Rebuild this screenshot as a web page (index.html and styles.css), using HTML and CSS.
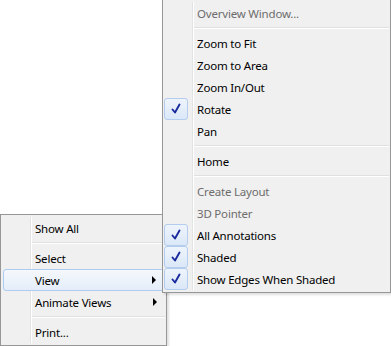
FILE: index.html
```html
<!DOCTYPE html>
<html>

<head>
    <link rel="stylesheet" href="styles.css">
</head>

<body>
    <div class="menu menu-main">
        <div class="item">Show All</div>
        <div class="sep"></div>
        <div class="item">Select</div>
        <div class="item hover">View<span class="arrow"></span></div>
        <div class="item">Animate Views<span class="arrow"></span></div>
        <div class="sep"></div>
        <div class="item">Print...</div>
    </div>

    <div class="menu menu-sub">
        <div class="item disabled">Overview Window...</div>
        <div class="sep"></div>
        <div class="item">Zoom to Fit</div>
        <div class="item">Zoom to Area</div>
        <div class="item">Zoom In/Out</div>
        <div class="item checked"><span class="check"><svg width="22" height="20" viewBox="0 0 22 20"><path d="M7.5 10.5 L10 13.5 L14.5 5.5" fill="none" stroke="#1a2a9e" stroke-width="1.9" stroke-linecap="round" stroke-linejoin="round"/></svg></span>Rotate</div>
        <div class="item">Pan</div>
        <div class="sep"></div>
        <div class="item">Home</div>
        <div class="sep"></div>
        <div class="item disabled">Create Layout</div>
        <div class="item disabled">3D Pointer</div>
        <div class="item checked"><span class="check"><svg width="22" height="20" viewBox="0 0 22 20"><path d="M7.5 10.5 L10 13.5 L14.5 5.5" fill="none" stroke="#1a2a9e" stroke-width="1.9" stroke-linecap="round" stroke-linejoin="round"/></svg></span>All Annotations</div>
        <div class="item checked"><span class="check"><svg width="22" height="20" viewBox="0 0 22 20"><path d="M7.5 10.5 L10 13.5 L14.5 5.5" fill="none" stroke="#1a2a9e" stroke-width="1.9" stroke-linecap="round" stroke-linejoin="round"/></svg></span>Shaded</div>
        <div class="item checked"><span class="check"><svg width="22" height="20" viewBox="0 0 22 20"><path d="M7.5 10.5 L10 13.5 L14.5 5.5" fill="none" stroke="#1a2a9e" stroke-width="1.9" stroke-linecap="round" stroke-linejoin="round"/></svg></span>Show Edges When Shaded</div>
    </div>
</body>

</html>
```

FILE: styles.css
```css
body {
    margin: 0;
    background-color: #fff;
    font-family: "Noto Sans", "Open Sans", sans-serif;
    font-size: 11.5px;
    letter-spacing: -0.2px;
}

/* popup menus float over the page */
.menu {
    position: absolute;
    box-sizing: border-box;
    background-color: #f0f0f0;
    border: 1px solid #979797;
    padding: 2px 0;
    box-shadow: 2px 2px 2px rgba(0, 0, 0, 0.12);
}

/* gutter line with a white edge */
.menu::before {
    content: "";
    position: absolute;
    top: 2px;
    bottom: 2px;
    left: 29px;
    width: 1px;
    background-color: #e2e3e3;
    border-right: 1px solid #fff;
}

.menu-main {
    left: 0;
    top: 214px;
    width: 167px;
}

.menu-sub {
    left: 162px;
    top: -1px;
    width: 229px;
}

.item {
    position: relative;
    height: 21px;
    padding-top: 1px;
    line-height: 22px;
    padding-left: 34px;
    color: #000;
    white-space: nowrap;
}

.disabled {
    color: #6d6d6d;
}

.sep {
    height: 8px;
    margin-left: 31px;
    margin-right: 1px;
    position: relative;
}

.sep::after {
    content: "";
    position: absolute;
    left: 0;
    right: 0;
    top: 3px;
    height: 1px;
    background-color: #e0e0e0;
    border-bottom: 1px solid #fff;
}

.hover {
    margin: 0 1px 0 2px;
    padding-left: 31px;
    border: 1px solid #aeccf1;
    border-radius: 3px;
    height: 19px;
    line-height: 20px;
    background: linear-gradient(#f5f8fc, #e4edf9);
}

.arrow {
    position: absolute;
    right: 9px;
    top: 50%;
    margin-top: -4px;
    width: 0;
    height: 0;
    border-top: 4px solid transparent;
    border-bottom: 4px solid transparent;
    border-left: 4px solid #000;
}

.hover .arrow {
    right: 8px;
}

.check {
    position: absolute;
    left: 1px;
    top: 0;
    width: 22px;
    height: 20px;
    border: 1px solid #b4cdee;
    border-radius: 3px;
    background: linear-gradient(#eef4fc, #dbe8f8);
}

.check svg {
    display: block;
}
```
